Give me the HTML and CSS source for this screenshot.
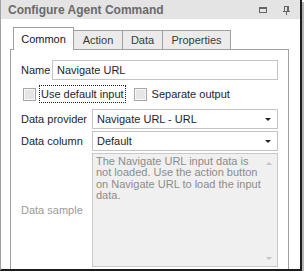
FILE: index.html
```html
<!DOCTYPE html>
<html lang="en">
<head>
    <meta charset="UTF-8">
    <title>Configure Agent Command</title>
    <link rel="stylesheet" href="styles.css">
</head>
<body>
    <div class="window">
        <div class="titlebar">
            <span class="title">Configure Agent Command</span>
            <span class="tools">
                <svg width="8" height="6" viewBox="0 0 8 6" class="tool-icon">
                    <rect x="0.5" y="0.5" width="7" height="5" fill="none" stroke="#666"/>
                    <rect x="0" y="0" width="8" height="2" fill="#666"/>
                </svg>
                <svg width="7" height="9" viewBox="0 0 7 9" class="tool-icon pin">
                    <rect x="1.5" y="0.5" width="4" height="5" fill="none" stroke="#666"/>
                    <rect x="4" y="1" width="1" height="4" fill="#666"/>
                    <rect x="0" y="5" width="7" height="1" fill="#666"/>
                    <rect x="3" y="6" width="1" height="3" fill="#666"/>
                </svg>
            </span>
        </div>
        <div class="window-body">
            <div class="tabs">
                <div class="tab active">Common</div>
                <div class="tab tab-action">Action</div>
                <div class="tab tab-data">Data</div>
                <div class="tab tab-props">Properties</div>
            </div>
            <div class="page">
                <div class="row name-row">
                    <label class="lbl lbl-name">Name</label>
                    <div class="field">Navigate URL</div>
                </div>
                <div class="row check-row">
                    <span class="checkbox"></span>
                    <span class="check-label focused">Use default input</span>
                    <span class="checkbox second"></span>
                    <span class="check-label">Separate output</span>
                </div>
                <div class="row select-row first">
                    <label class="lbl">Data provider</label>
                    <div class="field select">Navigate URL - URL<span class="arrow"></span></div>
                </div>
                <div class="row select-row">
                    <label class="lbl">Data column</label>
                    <div class="field select">Default<span class="arrow"></span></div>
                </div>
                <div class="row sample-row">
                    <label class="lbl dim">Data sample</label>
                    <div class="memo">
                        <div class="memo-text">The Navigate URL input data is<br>not loaded. Use the action button<br>on Navigate URL to load the input<br>data.</div>
                        <div class="memo-scroll">
                            <span class="sarrow up"></span>
                            <span class="sarrow down"></span>
                        </div>
                    </div>
                </div>
            </div>
        </div>
    </div>
</body>
</html>
```
FILE: styles.css
```css
body {
    margin: 0;
    padding: 0;
    background: #fff;
    font-family: 'Liberation Sans', Arial, sans-serif;
    font-size: 11px;
    color: #1e1e2a;
}
.window {
    width: 299px;
    height: 269px;
    border-left: 1px solid #a2a2a2;
    border-right: 2px solid #1c1c1c;
    border-bottom: 2px solid #1c1c1c;
    box-shadow: 2px 2px 0 #b4b4b4;
    background: #fff;
    display: flex;
    flex-direction: column;
    overflow: hidden;
}
.titlebar {
    height: 19px;
    background: #e4e4e4;
    display: flex;
    align-items: center;
    padding-left: 7px;
    box-sizing: border-box;
}
.title {
    font-weight: bold;
    font-size: 12px;
    color: #6a6a6a;
    flex: 1;
}
.tools {
    display: flex;
    align-items: center;
    gap: 16px;
    padding-right: 10px;
}
.tool-icon {
    display: block;
}
.pin {
    margin-top: 1px;
}
.window-body {
    flex: 1;
    padding: 8px 11px 0 9px;
    display: flex;
    flex-direction: column;
    min-height: 0;
}
.tabs {
    display: flex;
    align-items: flex-end;
    height: 22px;
    padding-left: 3px;
    position: relative;
    z-index: 1;
}
.tab {
    height: 19px;
    box-sizing: border-box;
    border: 1px solid #a0a0a0;
    border-bottom: none;
    background: #ebebeb;
    color: #3a3a3a;
    display: flex;
    align-items: center;
    justify-content: center;
    margin-left: -1px;
    font-size: 11px;
}
.tab.active {
    width: 61px;
    height: 23px;
    margin-left: 0;
    margin-bottom: -1px;
    background: #fff;
    color: #14142a;
    padding-bottom: 1px;
    position: relative;
    z-index: 2;
}
.tab-action {
    width: 50px;
}
.tab-data {
    width: 41px;
}
.tab-props {
    width: 69px;
}
.page {
    flex: 1;
    border: 1px solid #a0a0a0;
    border-bottom: none;
    padding: 10px 10px 0 10px;
    display: flex;
    flex-direction: column;
    min-height: 0;
}
.row {
    display: flex;
    align-items: center;
}
.lbl {
    width: 71px;
    flex: none;
}
.lbl-name {
    width: 31px;
}
.dim {
    color: #9a9a9a;
}
.field {
    flex: 1;
    height: 20px;
    box-sizing: border-box;
    border: 1px solid #c4c4c4;
    padding-left: 4px;
    display: flex;
    align-items: center;
    position: relative;
}
.check-row {
    margin-top: 5px;
    height: 18px;
}
.checkbox {
    width: 13px;
    height: 13px;
    box-sizing: border-box;
    border: 1px solid #a6a6a6;
    background: #e6e6e6;
    box-shadow: inset 0 0 0 1px #f8f8f8;
    margin-left: 2px;
    flex: none;
}
.checkbox.second {
    margin-left: 8px;
}
.check-label {
    margin-left: 3px;
    height: 18px;
    box-sizing: border-box;
    padding: 0 1px;
    display: flex;
    align-items: center;
    border: 1px dotted transparent;
}
.check-label.focused {
    border-color: #222;
}
.select-row.first {
    margin-top: 6px;
}
.select-row + .select-row {
    margin-top: 2px;
}
.select {
    padding-right: 16px;
}
.arrow {
    position: absolute;
    right: 6px;
    top: 8px;
    width: 0;
    height: 0;
    border-left: 3px solid transparent;
    border-right: 3px solid transparent;
    border-top: 3px solid #222;
}
.sample-row {
    margin-top: 2px;
    align-items: stretch;
    height: 114px;
}
.sample-row .lbl {
    display: flex;
    align-items: center;
}
.memo {
    flex: 1;
    border: 1px solid #c8c8c8;
    background: #f0f0f0;
    display: flex;
    color: #8c8c8c;
}
.memo-text {
    flex: 1;
    padding: 2px 0 0 3px;
    line-height: 11.3px;
}
.memo-scroll {
    width: 16px;
    display: flex;
    flex-direction: column;
    justify-content: space-between;
    align-items: center;
    padding: 8px 0 6px;
}
.sarrow {
    width: 0;
    height: 0;
    border-left: 3px solid transparent;
    border-right: 3px solid transparent;
}
.sarrow.up {
    border-bottom: 3px solid #c4c4c4;
}
.sarrow.down {
    border-top: 3px solid #c4c4c4;
}
```
